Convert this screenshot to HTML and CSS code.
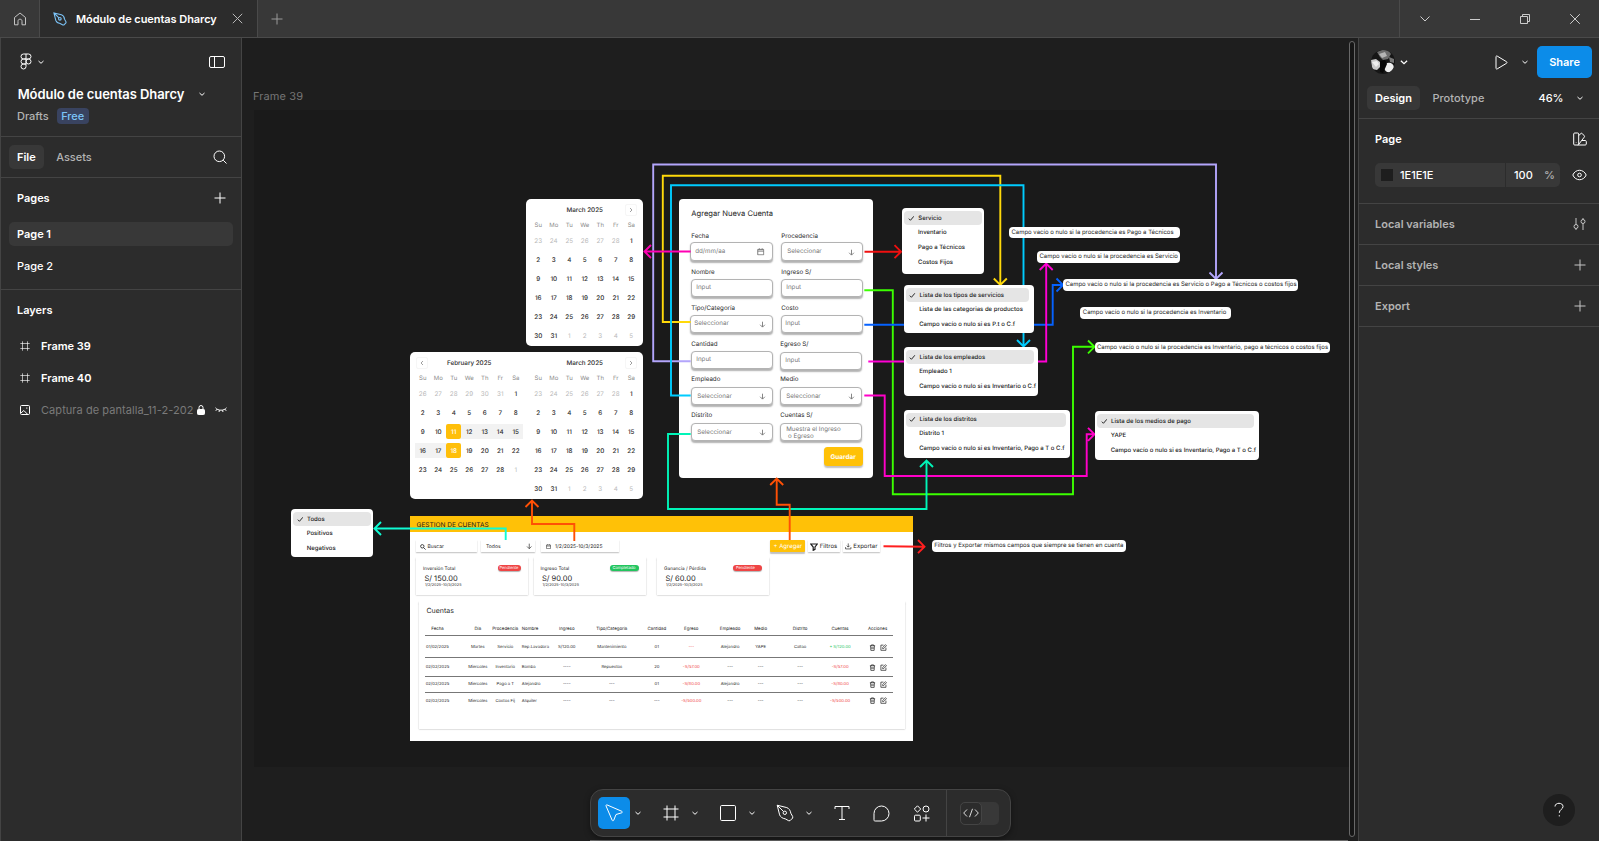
FILE: index.html
```html
<!DOCTYPE html>
<html lang="es">
<head>
<meta charset="utf-8">
<title>Módulo de cuentas Dharcy</title>
<link rel="stylesheet" href="styles.css">
</head>
<body>
<svg class="defs" width="0" height="0" aria-hidden="true">
  <symbol id="chev" viewBox="0 0 8 8"><path d="M1.5 3 4 5.3 6.5 3"/></symbol>
  <symbol id="plus" viewBox="0 0 12 12"><path d="M6 .5v11M.5 6h11"/></symbol>
  <symbol id="frame" viewBox="0 0 16 16"><path d="M4 .5v15M12 .5v15M.5 4h15M.5 12h15"/></symbol>
  <symbol id="pen" viewBox="0 0 18 18"><path d="M1.2 1.2 10.800 3.600C12.800 4.200 14.500 6.500 14.800 9.200L16.700 12.600V14L14 16.700H12.600L9.200 14.800C6.500 14.500 4.200 12.800 3.600 10.800ZM1.200 1.200 7.600 7.600"/><circle cx="8.800" cy="8.800" r="1.700"/></symbol>
  <symbol id="down" viewBox="0 0 8 8"><path d="M4 .8v6M1.300 4.300 4 7l2.700-2.700"/></symbol>
  <symbol id="check" viewBox="0 0 8 8"><path d="M1 4.500 3 6.500 7.300 1.500"/></symbol>
  <symbol id="trash" viewBox="0 0 8 8"><path d="M1 2h6M2.800 2V1h2.400v1M1.800 2l.3 5.300h3.800L6.200 2M3.300 3.500v2.300M4.700 3.500v2.300"/></symbol>
  <symbol id="edit" viewBox="0 0 8 8"><path d="M4 1.300H1v5.900h5.800V4.200M3 5.200V4l3.300-3.200L7.400 1.900 4.200 5.200Z"/></symbol>
  <symbol id="cal" viewBox="0 0 8 8"><path d="M.8 1.500h6.400v5.800H.8ZM.8 3.300h6.400M2.500.3v1.500M5.500.3v1.500"/></symbol>
</svg>

<header class="titlebar">
  <div class="home"><svg width="14" height="14" viewBox="0 0 14 14"><path d="M1.500 5.500 7 1l5.500 4.500v7.300H9V9.300C9 7.900 8.300 7.200 7 7.200S5 7.900 5 9.300v3.500H1.500Z"/></svg></div>
  <div class="tab">
    <svg class="tab-pen" width="14" height="14"><use href="#pen"/></svg>
    <span>Módulo de cuentas Dharcy</span>
    <svg class="tab-x" width="11" height="11" viewBox="0 0 11 11"><path d="M.8.8l9.400 9.400M10.200.8.8 10.200"/></svg>
  </div>
  <svg class="newtab" width="12" height="12"><use href="#plus"/></svg>
  <div class="winctl">
    <svg width="12" height="12" viewBox="0 0 12 12"><path d="M1.500 3.500 6 8l4.500-4.500"/></svg>
    <svg width="12" height="12" viewBox="0 0 12 12"><path d="M1 6.500h10"/></svg>
    <svg width="12" height="12" viewBox="0 0 12 12"><path d="M1.500 3.500h7v7h-7ZM3.500 3.500v-2h7v7h-2"/></svg>
    <svg width="12" height="12" viewBox="0 0 12 12"><path d="M1.200 1.200l9.600 9.600M10.800 1.200l-9.600 9.600"/></svg>
  </div>
</header>

<div class="workspace">
<aside class="left">
  <section class="file-head">
    <div class="row logo-row">
      <svg class="logo" width="12" height="18" viewBox="0 0 12 18"><path d="M6 1H3.500a2.500 2.500 0 0 0 0 5H6ZM6 1h2.500a2.500 2.500 0 0 1 0 5H6M6 6H3.500a2.500 2.500 0 0 0 0 5H6ZM6 11H3.500A2.500 2.500 0 1 0 6 13.500Z"/><circle cx="8.500" cy="8.500" r="2.500"/></svg>
      <svg class="chev" width="8" height="8"><use href="#chev"/></svg>
      <svg class="push" width="18" height="14" viewBox="0 0 18 14"><rect x="1.500" y="1.500" width="15" height="11" rx="1.500"/><path d="M6.500 1.500v11"/></svg>
    </div>
    <div class="row name-row"><h1>Módulo de cuentas Dharcy</h1><svg class="chev" width="8" height="8"><use href="#chev"/></svg></div>
    <div class="row drafts-row"><span class="muted">Drafts</span><span class="free">Free</span></div>
  </section>
  <section class="row panel-tabs">
    <span class="pill">File</span><span class="assets muted">Assets</span>
    <svg class="push" width="14" height="14" viewBox="0 0 14 14"><circle cx="6.300" cy="6.300" r="5.300"/><path d="m10.200 10.200 3.300 3.300"/></svg>
  </section>
  <section class="pages">
    <div class="row sec-title">Pages<svg class="push" width="12" height="12"><use href="#plus"/></svg></div>
    <div class="page active">Page 1</div>
    <div class="page">Page 2</div>
  </section>
  <section class="layers">
    <div class="row sec-title">Layers</div>
    <div class="row layer"><svg width="10" height="10"><use href="#frame"/></svg><b>Frame 39</b></div>
    <div class="row layer"><svg width="10" height="10"><use href="#frame"/></svg><b>Frame 40</b></div>
    <div class="row layer hidden-layer"><svg width="10" height="10" viewBox="0 0 10 10"><rect x=".5" y=".5" width="9" height="9" rx="1"/><path d="M1 8 3.800 5.500l4 4M6.800 2.500v1.200"/></svg><span>Captura de pantalla_11-2-202</span>
      <svg class="lock" width="8" height="10" viewBox="0 0 8 10"><rect class="solid" x=".5" y="4.500" width="7" height="5" rx=".8"/><path d="M2 4.500v-2a2 2 0 0 1 4 0v2"/></svg>
      <svg class="shut" width="12" height="6" viewBox="0 0 12 6"><path d="M.5.8C3 4 9 4 11.500.8M2 2.200.8 3.800M4.500 3.200 4 5M7.500 3.200 8 5M10 2.200l1.200 1.600"/></svg></div>
  </section>
</aside>

<main class="canvas">
 <div class="board">
  <span class="frame-label">Frame 39</span>
  <div class="frame"></div>

  <div class="node calendar cal-single"><div class="month" data-month="mar"></div></div>
  <div class="node calendar cal-double"><div class="month" data-month="feb"></div><div class="month" data-month="mar"></div></div>

  <form class="node form">
    <h2>Agregar Nueva Cuenta</h2>
    <div class="fields">
      <label>Fecha<span class="field tall wide">dd/mm/aa<svg width="7.500" height="7.500"><use href="#cal"/></svg></span></label>
      <label>Procedencia<span class="field tall">Seleccionar<svg width="7" height="7"><use href="#down"/></svg></span></label>
      <label>Nombre<span class="field">Input</span></label>
      <label>Ingreso S/<span class="field">Input</span></label>
      <label>Tipo/Categoría<span class="field wide">Seleccionar<svg width="7" height="7"><use href="#down"/></svg></span></label>
      <label>Costo<span class="field tight">Input</span></label>
      <label>Cantidad<span class="field">Input</span></label>
      <label class="shift">Egreso S/<span class="field low">Input</span></label>
      <label>Empleado<span class="field sel">Seleccionar<svg width="7" height="7"><use href="#down"/></svg></span></label>
      <label class="shift">Medio<span class="field sel">Seleccionar<svg width="7" height="7"><use href="#down"/></svg></span></label>
      <label>Distrito<span class="field sel">Seleccionar<svg width="7" height="7"><use href="#down"/></svg></span></label>
      <label class="shift">Cuentas S/<span class="field two"><i>Muestra el Ingreso<br>&nbsp;o Egreso</i></span></label>
    </div>
    <span class="save">Guardar</span>
  </form>

  <div class="node dash">
    <div class="dash-title">GESTION DE CUENTAS</div>
    <div class="dash-tools">
      <span class="tool search"><svg width="6" height="6" viewBox="0 0 6 6"><circle cx="2.300" cy="2.300" r="1.700"/><path d="M3.600 3.600 5.600 5.600"/></svg>Buscar</span>
      <span class="tool todos">Todos<svg width="6.500" height="6.500"><use href="#down"/></svg></span>
      <span class="tool date"><svg width="5" height="5"><use href="#cal"/></svg>1/2/2025-10/3/2025</span>
      <span class="tool add">+ Agregar</span>
      <span class="tool filter"><svg width="8" height="8" viewBox="0 0 8 8"><path d="M.7 1h6.600L5 4v2.300L3.200 7.300V4Z"/></svg>Filtros</span>
      <span class="tool export"><svg width="6.500" height="6.500" viewBox="0 0 8 8"><path d="M4 .5v4.500M2.200 3.300 4 5.100l1.800-1.800M.7 5v2.300h6.600V5"/></svg>Exportar</span>
    </div>
    <div class="cards">
      <div class="card"><div class="card-top">Inversión Total<em class="red short">Pendiente</em></div><strong>S/ 150.00</strong><small>1/2/2025-10/3/2025</small></div>
      <div class="card"><div class="card-top">Ingreso Total<em class="green">Completado</em></div><strong>S/ 90.00</strong><small>1/2/2025-10/3/2025</small></div>
      <div class="card last"><div class="card-top">Ganancia / Pérdida<em class="red">Pendiente</em></div><strong>S/ 60.00</strong><small>1/2/2025-10/3/2025</small></div>
    </div>
    <div class="accounts">
      <h3>Cuentas</h3>
      <div class="tr th"><span>Fecha</span><span>Día</span><span>Procedencia</span><span>Nombre</span><span>Ingreso</span><span>Tipo/Categoría</span><span>Cantidad</span><span>Egreso</span><span>Empleado</span><span>Medio</span><span>Distrito</span><span>Cuentas</span><span>Acciones</span></div>
      <div class="tr r1"><span>01/02/2025</span><span>Martes</span><span>Servicio</span><span>Rep.Lavadora</span><span>S/120.00</span><span>Mantenimiento</span><span>01</span><span class="neg">---</span><span>Alejandro</span><span>YAPE</span><span>Callao</span><span class="pos">+ S/120.00</span><span class="act"><svg><use href="#trash"/></svg><svg><use href="#edit"/></svg></span></div>
      <div class="tr r2"><span>02/02/2025</span><span>Miercoles</span><span>Inventario</span><span>Bomba</span><span>----</span><span>Repuestos</span><span>20</span><span class="neg">-S/57.00</span><span>---</span><span>---</span><span>---</span><span class="neg">-S/57.00</span><span class="act"><svg><use href="#trash"/></svg><svg><use href="#edit"/></svg></span></div>
      <div class="tr r3"><span>02/02/2025</span><span>Miercoles</span><span>Pago a T</span><span>Alejandro</span><span>----</span><span>---</span><span>01</span><span class="neg">-S/80.00</span><span>Alejandro</span><span>---</span><span>---</span><span class="neg">-S/80.00</span><span class="act"><svg><use href="#trash"/></svg><svg><use href="#edit"/></svg></span></div>
      <div class="tr r4"><span>02/02/2025</span><span>Miercoles</span><span>Costos Fij</span><span>Alquiler</span><span>----</span><span>---</span><span>---</span><span class="neg">-S/500.00</span><span>---</span><span>---</span><span>---</span><span class="neg">-S/500.00</span><span class="act"><svg><use href="#trash"/></svg><svg><use href="#edit"/></svg></span></div>
    </div>
  </div>

  <svg class="wires" width="1599" height="841" viewBox="0 0 1599 841">
    <path stroke="#b3a5fb" d="M690.700 361.300H653.200V164.500H1216V279M1209.500 272.500 1216 279l6.500-6.500"/>
    <path stroke="#ffd90a" d="M690.700 322H662.800V175.800H1000.300V285M993.800 278.500l6.500 6.500 6.500-6.500"/>
    <path stroke="#0cf" d="M690.700 395.500H671V185.300H1023.500V346.500M1017 340l6.500 6.500 6.500-6.500"/>
    <path stroke="#ff00b3" d="M690.700 251.500H644.500M651 245l-6.500 6.500 6.500 6.500"/>
    <path stroke="#f00f0f" d="M864.500 251.700H901.500M894.500 245.200l6.500 6.500-6.500 6.500"/>
    <path stroke="#3bff00" d="M864.300 290.300H892.800V494.300H1073V346.800H1095M1088 340.500l6.500 6.300-6.500 6.500"/>
    <path stroke="#0562ff" d="M864.300 324.800H1052.700V285H1063.500M1056.500 278.500 1063 285l-6.500 6.500"/>
    <path stroke="#ff00d4" d="M868.300 361.500H1046.200V263M1039.700 270l6.500-6.500 6.500 6.500"/>
    <path stroke="#ff00c8" d="M864.300 395.500H884.700V476H1086.700V434.300H1095M1088 427.800l6.500 6.500-6.500 6.500"/>
    <path stroke="#00f5b8" d="M690.700 434H668V509H926.500V460.500M920 467l6.500-6.500 6.500 6.500"/>
    <path stroke="#ff5005" d="M574.300 541V524H532V500.500M525.500 507l6.500-6.500 6.500 6.500"/>
    <path stroke="#ff5005" d="M789.700 540V504.700H776.700V478.500M770.200 485l6.500-6.500 6.500 6.500"/>
    <path stroke="#0ffcd4" d="M505.700 540V528.500H374M381 522l-6.500 6.500 6.500 6.500"/>
    <path stroke="#ff1f1f" d="M883.500 546.300 925 546.700M918 540l6.500 6.700-6.500 6.500"/>
  </svg>

  <ul class="node menu m1"><li class="on"><svg><use href="#check"/></svg>Servicio</li><li>Inventario</li><li>Pago a Técnicos</li><li>Costos Fijos</li></ul>
  <ul class="node menu m2"><li class="on"><svg><use href="#check"/></svg>Lista de los tipos de servicios</li><li>Lista de las categorias de productos</li><li>Campo vacío o nulo si es P.t o C.f</li></ul>
  <ul class="node menu m3"><li class="on"><svg><use href="#check"/></svg>Lista de los empleados</li><li>Empleado 1</li><li>Campo vacío o nulo si es Inventario o C.f</li></ul>
  <ul class="node menu m4"><li class="on"><svg><use href="#check"/></svg>Lista de los distritos</li><li>Distrito 1</li><li>Campo vacío o nulo si es Inventario, Pago a T o C.f</li></ul>
  <ul class="node menu m5"><li class="on"><svg><use href="#check"/></svg>Lista de los medios de pago</li><li>YAPE</li><li>Campo vacío o nulo si es Inventario, Pago a T o C.f</li></ul>
  <ul class="node menu m6"><li class="on"><svg><use href="#check"/></svg>Todos</li><li>Positivos</li><li>Negativos</li></ul>

  <p class="node note n1">Campo vacío o nulo si la procedencia es Pago a Técnicos</p>
  <p class="node note n2">Campo vacío o nulo si la procedencia es Servicio</p>
  <p class="node note n3">Campo vacío o nulo si la procedencia es Servicio o Pago a Técnicos o costos fijos</p>
  <p class="node note n4">Campo vacío o nulo si la procedencia es Inventario</p>
  <p class="node note n5">Campo vacío o nulo si la procedencia es Inventario, pago a técnicos o costos fijos</p>
  <p class="node note n6">Filtros y Exportar mismos campos que siempre se tienen en cuenta</p>
 </div>
 <div class="vscroll"></div>
 <div class="hscroll"></div>
 <nav class="toolbar">
   <span class="btn active"><svg width="20" height="20" viewBox="0 0 20 20"><path d="M2 2.900C1.800 2.200 2.400 1.700 3 1.900L17.800 8.300C18.500 8.600 18.400 9.600 17.700 9.800L12 11.500 9.700 17.300C9.400 18 8.500 18 8.200 17.300Z"/></svg></span><svg class="chev tool-chev" width="8" height="8"><use href="#chev"/></svg>
   <span class="btn"><svg width="16" height="16"><use href="#frame"/></svg></span><svg class="chev tool-chev" width="8" height="8"><use href="#chev"/></svg>
   <span class="btn"><svg width="16" height="16" viewBox="0 0 16 16"><rect x=".5" y=".5" width="15" height="15" rx="1.200"/></svg></span><svg class="chev tool-chev" width="8" height="8"><use href="#chev"/></svg>
   <span class="btn"><svg width="18" height="18"><use href="#pen"/></svg></span><svg class="chev tool-chev" width="8" height="8"><use href="#chev"/></svg>
   <span class="btn"><svg width="16" height="16" viewBox="0 0 16 16"><path d="M1 4V1.500h14V4M8 1.500v13M5 14.500h6"/></svg></span>
   <span class="btn"><svg width="17" height="17" viewBox="0 0 17 17"><path d="M8.500 1A7.500 7.500 0 0 1 8.500 16H2.200C1.300 16 1 15.700 1 14.800V8.500A7.500 7.500 0 0 1 8.500 1Z"/></svg></span>
   <span class="btn"><svg width="17" height="17" viewBox="0 0 17 17"><path d="m4.500.8 3.200 3.200-3.200 3.200L1.300 4ZM13 9.500v7M9.500 13h7"/><circle cx="13" cy="4" r="3"/><rect x="1.500" y="10.200" width="5.800" height="5.800" rx="1"/></svg></span>
   <span class="dev"><span class="toggle"><span class="knob"><svg width="16" height="10" viewBox="0 0 16 10"><path d="M4 1.500.7 5 4 8.500M12 1.500 15.300 5 12 8.500M9.500.8l-3 8.400"/></svg></span></span></span>
 </nav>
</main>

<aside class="right">
  <section class="top">
    <div class="row user-row">
      <svg class="avatar" width="24" height="24" viewBox="0 0 24 24"><clipPath id="av"><circle cx="12" cy="12" r="12"/></clipPath><g clip-path="url(#av)"><rect width="24" height="24" fill="#161616"/><path fill="#6d6d6d" d="M6 2 11 0h6l3 4-3 5-5 1-3-3Z"/><path fill="#b5b5b5" d="M8 4l6-2 2 4-5 2Z"/><path fill="#c9c9c9" d="M0 10l5-1 4 3 1 4-4 4-5-1Z"/><path fill="#eee" d="M1 12l5-1 2 3-3 3Z"/><circle cx="18" cy="17.500" r="4.800" fill="#efefef"/><path fill="#080808" d="M9 11l5-1 2 4-4 9-3-1Z"/><path fill="#777" d="M18 7l5 2v4l-4-1Z"/></g></svg>
      <svg class="chev big" width="10" height="10"><use href="#chev"/></svg>
      <svg class="play" width="13" height="15" viewBox="0 0 13 15"><path d="M1 1.800C1 1 1.600.8 2.200 1.100l9.300 5.600c.7.400.7 1.200 0 1.600l-9.300 5.600C1.600 14.200 1 14 1 13.200Z"/></svg>
      <svg class="chev" width="8" height="8"><use href="#chev"/></svg>
      <span class="share">Share</span>
    </div>
    <div class="row mode-row"><span class="pill">Design</span><span class="proto muted">Prototype</span><span class="zoom">46%</span><svg class="chev" width="8" height="8"><use href="#chev"/></svg></div>
  </section>
  <section class="page-sec">
    <div class="row page-title">Page<svg class="push" width="14" height="14" viewBox="0 0 14 14"><rect x=".7" y="1" width="5" height="12" rx="1"/><path d="m5.700 3.500 2.300-2c.5-.4.9-.4 1.300.1l2 2.300c.4.500.3.900-.1 1.300L6 12M9 8.500h3.300c.6 0 1 .4 1 1V12c0 .6-.4 1-1 1H4.500M3.200 10.500v.5"/></svg></div>
    <div class="row color-row"><div class="color"><i class="swatch"></i><span class="hex">1E1E1E</span><span class="pct">100</span><span class="muted">%</span></div>
    <svg class="push" width="15" height="12" viewBox="0 0 15 12"><path d="M.8 6C3.500-.3 11.500-.3 14.200 6 11.500 12.300 3.500 12.300.8 6Z"/><circle cx="7.500" cy="6" r="1.800"/></svg></div>
  </section>
  <section class="row local">Local variables<svg class="push" width="13" height="12" viewBox="0 0 13 12"><path d="M3 0v6.500M3 10.500V12M10 0v1.500M10 5.500V12"/><circle cx="3" cy="8.500" r="2"/><circle cx="10" cy="3.500" r="2"/></svg></section>
  <section class="row local">Local styles<svg class="push" width="12" height="12"><use href="#plus"/></svg></section>
  <section class="row local">Export<svg class="push" width="12" height="12"><use href="#plus"/></svg></section>
  <span class="help"><svg width="12" height="16" viewBox="0 0 12 16"><path d="M2 4.500C2 .2 10 .2 10 4.500 10 7.300 6.300 7.500 6.300 10.800M6.300 13.200v1.200"/></svg></span>
</aside>
</div>
<script src="script.js"></script>
</body>
</html>
```
FILE: styles.css
```css
* { box-sizing: border-box; }
body { margin: 0; width: 1599px; height: 841px; overflow: hidden; background: #1e1e1e; color: #fff; font: 500 11px/16px Inter, sans-serif; letter-spacing: -.02px; }
svg { fill: none; stroke: currentColor; flex: none; display: block; }
.defs { position: absolute; }
h1, h2, h3, p, ul { margin: 0; padding: 0; font-weight: inherit; }
li { list-style: none; }
.row { display: flex; align-items: center; }
.push { margin-left: auto; }
.muted { color: #b3b3b3; }
.pill { background: #383838; border-radius: 5px; padding: 4px 8px; font-weight: 600; }

/* window title bar */
.titlebar { display: flex; align-items: center; height: 38px; background: #383838; border-bottom: 1px solid #4a4a4a; }
.home { width: 40px; height: 37px; display: flex; align-items: center; justify-content: center; border-right: 1px solid #4a4a4a; color: #c4c4c4; }
.tab { width: 218px; height: 38px; margin-bottom: -1px; padding-left: 13px; display: flex; align-items: center; background: #2c2c2c; border-right: 1px solid #4a4a4a; border-bottom: 1px solid #4a4a4a; font-weight: 600; }
.tab span { margin-left: 9px; width: 155.500px; letter-spacing: -.06px; }
.tab-pen { color: #7cc4f8; stroke-width: 1.400; }
.tab-x { color: #b8b8b8; }
.newtab { margin-left: 13px; color: #999; }
.winctl { margin-left: auto; width: 200px; height: 37px; border-left: 1px solid #4a4a4a; display: grid; grid-template-columns: repeat(4, 50px); align-items: center; justify-items: center; color: #ccc; }

.workspace { display: grid; grid-template-columns: 242px 1116px 241px; height: 803px; }

/* left panel */
.left { background: #2c2c2c; border-left: 1px solid #444; border-right: 1px solid #444; }
.left section { border-bottom: 1px solid #444; }
.left .layers { border: 0; }
.file-head { height: 99px; padding: 14px 16px 0; }
.logo-row { height: 20px; }
.logo { margin-left: 2.500px; }
.logo + .chev { margin-left: 5.500px; }
.logo-row .push { margin-right: -1px; }
.name-row { height: 24px; margin-top: 10px; }
.name-row h1 { font-size: 13px; font-weight: 600; letter-spacing: -.06px; width: 181px; padding-left: .7px; }
.drafts-row { height: 18px; margin-top: 1px; }
.free { margin-left: 8px; padding: 0 4.500px; border-radius: 4px; background: #394360; color: #7cc4f8; }
.panel-tabs { height: 41px; padding: 0 14px 0 8px; }
.assets { margin-left: 12.500px; }
.pages { height: 112px; padding: 0 8px; }
.sec-title { height: 40px; padding: 0 7px 0 8px; font-weight: 600; }
.page { height: 24px; padding: 4px 8px; margin-top: 8px; }
.page.active { background: #383838; border-radius: 5px; margin-top: 4px; font-weight: 600; }
.layers { padding: 0 13px 0 8px; }
.layer { height: 32px; padding-left: 11px; }
.layer b, .layer span { margin-left: 11px; font-weight: 600; }
.layer span { width: 152px; overflow: hidden; white-space: nowrap; color: #7a7a7a; font-weight: 400; letter-spacing: .06px; }
.lock { margin-left: 4px; }
.lock .solid { fill: currentColor; }
.shut { margin-left: 10px; }

/* canvas */
.canvas { position: relative; overflow: hidden; background: #1e1e1e; }
.board { position: absolute; left: -242px; top: -38px; width: 1599px; height: 841px; color: #1e1e1e; text-rendering: geometricPrecision; }
.frame-label { position: absolute; left: 253px; top: 88px; color: #767676; font-size: 11px; font-weight: 400; letter-spacing: .1px; }
.frame { position: absolute; left: 254px; top: 110px; width: 1095px; height: 657px; background: #1a1a1a; }
.node { position: absolute; background: #fff; }
.wires { position: absolute; left: 0; top: 0; stroke-width: 1.900; }
.vscroll { position: absolute; right: 3px; top: 3px; width: 6px; height: 796px; border: 1px solid #686868; border-radius: 3px; background: #151515; }
.hscroll { position: absolute; left: 348px; right: 10px; bottom: 0; height: 1px; background: #686868; }

/* calendars */
.calendar { display: flex; gap: 7px; padding: 4px 4.200px; height: 147.300px; border-radius: 5px; font-size: 6.300px; line-height: 16px; letter-spacing: 0; color: #2b2b2b; }
.cal-single { left: 526.300px; top: 199px; width: 116.400px; }
.cal-double { left: 410.300px; top: 352px; width: 232.400px; padding-left: 4.700px; }
.month { width: 108.500px; }
.cal-head { display: grid; grid-template-columns: 15px 1fr 15px; height: 13px; line-height: 14px; text-align: center; align-items: center; }
.cal-head .nav { width: 12px; height: 12.500px; border: 1px solid #f6f6f6; border-radius: 2px; margin: auto; display: flex; align-items: center; justify-content: center; color: #777; stroke-width: .7; }
.days { display: grid; grid-template-columns: repeat(7, 15.500px); text-align: center; }
.weekdays { margin-top: 4px; height: 10px; line-height: 11px; color: #8a8a8a; font-weight: 400; font-size: 6px; }
.dates { margin-top: 3.200px; row-gap: 4px; grid-auto-rows: 15px; }
.dates .out { color: #b9b9b9; font-weight: 400; }
.dates .in { background: #f2f2f2; }
.dates .pick { background: #ffbf0a; color: #fff; border-radius: 2px; }

/* account form */
.form { left: 679.300px; top: 199px; width: 194.200px; height: 279px; border-radius: 4px; padding: 8.500px 10px 0 12px; font-size: 6.200px; font-weight: 400; letter-spacing: 0; }
.form h2 { font-size: 7.600px; line-height: 12px; }
.fields { margin-top: 12.500px; display: grid; grid-template-columns: 81.300px 81.300px; column-gap: 8.700px; grid-auto-rows: 35.850px; }
.fields label { display: block; line-height: 8px; padding-top: 1px; }
.fields .shift { margin-left: -1px; margin-right: 1px; }
.field { display: flex; align-items: center; justify-content: space-between; height: 18px; margin-top: 2px; padding: 1px 5.500px 0 4px; border: .6px solid #b3b3b3; border-radius: 4px; box-shadow: 0 1.300px 1.500px rgba(0,0,0,.3); color: #757575; background: #fff; stroke-width: 1; }
.field i { font-style: normal; line-height: 7px; }
.field.tall { height: 19px; margin-top: 1.200px; padding-left: 5px; }
.field.wide { margin-left: -1px; padding-left: 3px; }
.field.tall svg { margin-right: 1.500px; }
.field.wide.tall { padding-left: 4px; }
.field.tight { padding-left: 3px; }
.field.low { margin-top: 3px; }
.field.sel, .field.two { margin-top: 2.800px; padding-left: 5px; }
.save { display: flex; align-items: center; justify-content: center; width: 39px; height: 18.700px; margin: .3px 0 0 132.400px; border-radius: 3.500px; background: #ffc107; color: #fff; font-weight: 700; font-size: 6.400px; box-shadow: 0 1.300px 1.500px rgba(0,0,0,.25); }

/* drop-down lists */
.menu { border-radius: 4px; padding: 3px 2px; font-size: 6px; font-weight: 450; letter-spacing: 0; line-height: 16.400px; white-space: nowrap; color: #222; }
.menu li { padding-left: 13.700px; height: 15.200px; }
.menu .on { display: flex; align-items: center; height: 14px; padding: 1px 0 0 3.500px; gap: 4px; border-radius: 4px; background: #e5e5e5; line-height: 14px; }
.menu .on + li { margin-top: -.4px; }
.menu .on svg { width: 6.500px; height: 6.500px; margin-top: -1px; stroke-width: 1.200; }
.m1 { left: 902.300px; top: 208px; width: 82px; height: 66px; }
.m2 { left: 903.500px; top: 285px; width: 130px; height: 48.300px; padding-right: 5px; }
.m3 { left: 903.500px; top: 347.300px; width: 134.500px; height: 48.300px; padding-right: 4px; }
.m4 { left: 903.500px; top: 409.700px; width: 166.500px; height: 48.300px; padding-right: 4px; }
.m5 { left: 1095px; top: 411.300px; width: 164.300px; height: 48.300px; padding-right: 5px; }
.m6 { left: 291px; top: 509px; width: 82.300px; height: 48px; }

/* notes */
.note { height: 11.500px; border-radius: 4px; padding-left: 2.500px; font-size: 5.970px; font-weight: 400; line-height: 12.700px; letter-spacing: 0; white-space: nowrap; }
.n1 { left: 1009px; top: 226.500px; width: 171px; }
.n2 { left: 1037px; top: 251.300px; width: 143px; }
.n3 { left: 1063px; top: 279.300px; width: 234.700px; }
.n4 { left: 1080.300px; top: 307.300px; width: 150.700px; }
.n5 { left: 1094.500px; top: 341.800px; width: 235.500px; }
.n6 { left: 931.700px; top: 540.300px; width: 194.300px; }

/* accounts dashboard */
.dash { left: 410px; top: 516px; width: 503px; height: 224.700px; font-size: 5px; font-weight: 400; letter-spacing: 0; line-height: 6px; }
.dash-title { height: 16px; padding-left: 6.500px; background: #ffc107; font-size: 6.550px; line-height: 18px; }
.dash-tools { display: flex; margin: 8px 0 0 6px; height: 12.300px; }
.tool { display: flex; align-items: center; padding-top: 1px; box-shadow: 0 1.200px 1.200px rgba(0,0,0,.25); stroke-width: .8; }
.search { width: 60.500px; padding-left: 3.500px; gap: 2px; }
.todos { width: 54px; margin-left: 4.500px; padding: 1px 3px 0 5px; justify-content: space-between; }
.date { width: 78px; margin-left: 5.500px; padding-left: 5px; gap: 4.500px; }
.add { width: 35px; margin-left: 151.800px; justify-content: center; background: #ffc107; color: #fff; font-size: 6px; border-radius: 1px; }
.filter { width: 32px; margin-left: 3px; padding-left: 2px; gap: 1.500px; font-size: 6px; stroke-width: 1.200; }
.export { width: 37px; margin-left: 3px; padding-left: 2px; gap: 1.500px; font-size: 6px; }
.cards { display: flex; gap: 5.500px; margin: 4.500px 0 0 6px; }
.card { width: 112px; height: 38.500px; padding: 7.800px 7px 0 7px; box-shadow: 0 1.200px 1.500px rgba(0,0,0,.3); }
.card.last { margin-left: 6px; }
.card-top { display: flex; justify-content: space-between; height: 7px; line-height: 8px; font-size: 4.700px; }
.card em { width: 29px; height: 6.300px; border-radius: 3px; padding-left: 3px; color: #fff; font-style: normal; font-size: 4px; line-height: 6.300px; box-shadow: 0 1px 1px rgba(0,0,0,.3); }
.card .short { width: 23.500px; padding-left: 2px; }
.red { background: #ef4444; }
.green { background: #22c55e; }
.card strong { display: block; margin: 2.200px 0 0 1.500px; font-size: 7.500px; line-height: 9px; font-weight: 400; }
.card small { display: block; margin-left: 2px; font-size: 3.850px; line-height: 4.500px; }
.accounts { margin: 5.500px 0 0 8.500px; width: 486.500px; height: 128.500px; padding: 5.500px 12px 0 5.500px; box-shadow: 0 1.200px 1.500px rgba(0,0,0,.3); }
.accounts h3 { padding-left: 2.500px; font-size: 7px; line-height: 10px; }
.tr { display: flex; align-items: center; border-bottom: 1px solid #777; font-size: 4.200px; white-space: nowrap; margin-left: .5px; }
.th { height: 19.500px; padding-top: 7px; font-size: 4.400px; }
.r1 { height: 22px; padding-top: 1.500px; }
.r2 { height: 19px; padding-top: 1px; }
.r3 { height: 16px; }
.r4 { height: 16px; border: 0; }
.tr span { flex: none; display: flex; justify-content: center; width: 24px; padding-top: 1.500px; }
.tr span:nth-child(1) { width: 30px; margin-left: -2px; }
.tr span:nth-child(2) { width: 26px; margin-left: 12.300px; }
.tr span:nth-child(3) { width: 28px; margin-left: .5px; }
.tr span:nth-child(4) { width: 27px; margin-left: 2.500px; justify-content: flex-start; }
.tr span:nth-child(5) { margin-left: 6px; }
.tr span:nth-child(6) { width: 34px; margin-left: 16px; }
.tr span:nth-child(7) { margin-left: 16px; }
.tr span:nth-child(8) { margin-left: 10.500px; }
.tr span:nth-child(9) { margin-left: 14.800px; }
.tr span:nth-child(10) { width: 18px; margin-left: 9.500px; }
.tr span:nth-child(11) { width: 20px; margin-left: 20.500px; }
.tr span:nth-child(12) { margin-left: 18px; }
.tr span:nth-child(13) { width: 20px; margin-left: 15.500px; }
.tr .act { gap: 4px; padding-top: 0; }
.act svg { width: 7px; height: 7px; stroke-width: .8; }
.neg { color: #ef4444; }
.pos { color: #22c55e; }

/* bottom toolbar */
.toolbar { position: absolute; left: 348px; top: 751px; width: 421px; height: 48px; padding-left: 7px; display: flex; align-items: center; background: #2c2c2c; border: 1px solid #444; border-radius: 13px; box-shadow: 0 2px 6px rgba(0,0,0,.4); }
.btn { width: 32px; height: 32px; margin-right: 8px; display: flex; align-items: center; justify-content: center; border-radius: 5px; }
.btn.active { background: #0c8ce9; }
.btn:has(+ .chev) { margin-right: 0; }
.tool-chev { margin: 0 12.800px 0 4.200px; }
.dev { height: 46px; border-left: 1px solid #444; padding-left: 13px; display: flex; align-items: center; }
.toggle { width: 39px; height: 23px; border-radius: 5px; background: #383838; }
.knob { width: 22px; height: 23px; display: flex; align-items: center; justify-content: center; border: 1px solid #444; border-radius: 5px; background: #2c2c2c; color: #ddd; }

/* right panel */
.right { display: flex; flex-direction: column; background: #2c2c2c; border-left: 1px solid #444; }
.right section { border-bottom: 1px solid #444; }
.top { height: 81px; padding: 8px 7px 0 8px; }
.user-row { height: 32px; }
.avatar { margin-left: 4px; stroke: none; }
.big { margin-left: 4px; }
.play { margin-left: 86px; }
.play + .chev { margin-left: 13px; }
.share { margin-left: auto; width: 55px; height: 32px; border-radius: 5px; background: #0c8ce9; text-align: center; line-height: 32px; font-weight: 600; }
.mode-row { height: 24px; margin-top: 8px; }
.proto { margin-left: 12.500px; letter-spacing: .05px; }
.zoom { margin-left: auto; margin-right: 12.500px; }
.mode-row .chev { margin-right: 8px; }
.page-sec { height: 85px; padding: 0 12px 0 16px; }
.page-title { height: 40px; font-weight: 600; }
.color-row { height: 24px; margin-top: 4px; }
.color { display: flex; align-items: center; width: 185px; height: 24px; padding-left: 6px; border-radius: 5px; background: #383838; }
.swatch { width: 12px; height: 12px; background: #1e1e1e; }
.hex { margin-left: 7px; width: 106px; height: 24px; line-height: 24px; border-right: 1px solid #2c2c2c; }
.pct { margin-left: 8px; width: 30px; }
.local { height: 41px; padding: 0 13px 0 16px; color: #b3b3b3; font-weight: 600; }
.local svg { stroke: #c4c4c4; }
.help { margin: auto 24px 15px auto; width: 32px; height: 32px; border-radius: 50%; background: #1e1e1e; display: flex; align-items: center; justify-content: center; }
```
FILE: script.js
```js
const range = (a, b) => Array.from({ length: b - a + 1 }, (_, i) => a + i);
const months = {
  feb: { title: 'February 2025', before: range(26, 31), days: 28, after: [1], nav: 'left', from: 11, to: 18 },
  mar: { title: 'March 2025', before: range(23, 28), days: 31, after: range(1, 5), nav: 'right' }
};
const arrow = d => `<span class="nav"><svg width="4" height="6" viewBox="0 0 4 6"><path d="${d}"/></svg></span>`;
document.querySelectorAll('.month').forEach(el => {
  const m = months[el.dataset.month];
  const cell = (n, c) => `<span class="${c}">${n}</span>`;
  const state = n => n === m.from || n === m.to ? 'pick' : n > m.from && n < m.to ? 'in' : '';
  const left = m.nav === 'left' ? arrow('M3 1 1 3l2 2') : '<span></span>';
  const right = m.nav === 'right' ? arrow('M1 1l2 2-2 2') : '<span></span>';
  el.innerHTML = `<div class="cal-head">${left}<span>${m.title}</span>${right}</div>` +
    `<div class="days weekdays">${['Su', 'Mo', 'Tu', 'We', 'Th', 'Fr', 'Sa'].map(d => cell(d, '')).join('')}</div>` +
    `<div class="days dates">${m.before.map(n => cell(n, 'out')).join('')}${range(1, m.days).map(n => cell(n, state(n))).join('')}${m.after.map(n => cell(n, 'out')).join('')}</div>`;
});
```
